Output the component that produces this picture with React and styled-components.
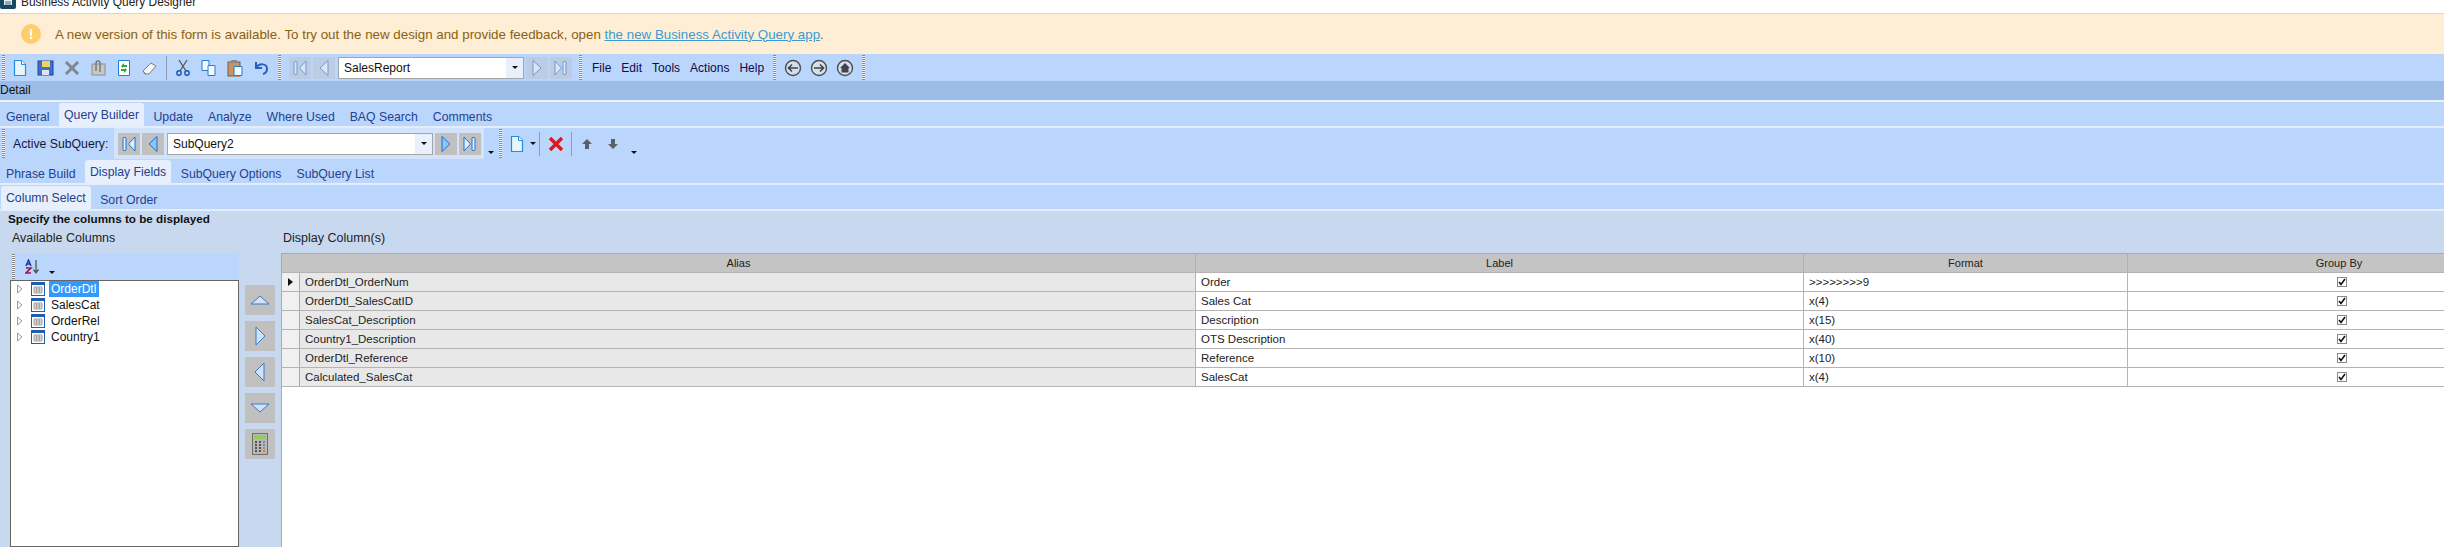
import React from "react";
import styled, { createGlobalStyle } from "styled-components";

const GlobalStyle = createGlobalStyle`
    html, body {
        margin: 0;
        padding: 0;
        background: #fff;
        overflow: hidden;
    }
    body {
        font-family: "Liberation Sans", Arial, sans-serif;
        font-size: 12px;
    }
`;

const Page = styled.div`
    width: 2444px;
    height: 547px;
    overflow: hidden;
    display: flex;
    flex-direction: column;
    color: #111;
`;

const TitleBar = styled.div`
    height: 13px;
    flex: none;
    display: flex;
    align-items: flex-start;
    gap: 5px;
    overflow: hidden;
    font-size: 11.9px;
    line-height: 14px;
    color: #222;
    border-bottom: 1px solid #c6daf4;
`;

const TitleText = styled.span`
    margin-top: -5px;
`;

const Banner = styled.div`
    height: 40px;
    flex: none;
    background: #fdeed5;
    display: flex;
    align-items: center;
    gap: 14px;
    padding-left: 21px;
    font-size: 13.33px;
    color: #8a6114;
`;

const WarnDot = styled.div`
    width: 20px;
    height: 20px;
    border-radius: 50%;
    background: #fdcf6c;
    color: #fff;
    font-weight: bold;
    font-size: 14px;
    display: flex;
    align-items: center;
    justify-content: center;
`;

const BannerLink = styled.a`
    color: #3d9ad1;
    text-decoration: underline;
`;

const ToolStrip = styled.div`
    height: ${(p) => p.$h || 27}px;
    flex: none;
    background: #bad6fd;
    display: flex;
    align-items: center;
`;

const Grip = styled.div`
    width: 3px;
    height: ${(p) => p.$h || 25}px;
    margin: 0 ${(p) => p.$m ?? 4}px 0 ${(p) => p.$l ?? 2}px;
    flex: none;
    background: repeating-linear-gradient(#8a8a8a 0 1px, #eef3fb 1px 2px);
`;

const ToolIcon = styled.svg`
    width: 18px;
    height: 18px;
    flex: none;
    margin-right: ${(p) => p.$gap ?? 8}px;
`;

const Divider = styled.div`
    width: 1px;
    height: 24px;
    flex: none;
    background: #8f9caf;
    margin: 0 ${(p) => p.$r ?? 8}px 0 ${(p) => p.$l ?? 0}px;
`;

const NavButton = styled.div`
    width: 22px;
    height: 22px;
    flex: none;
    background: ${(p) => (p.$on ? "#c0c0c0" : "#bccde3")};
    margin-right: 2px;
    display: flex;
    align-items: center;
    justify-content: center;
`;

const Combo = styled.div`
    width: ${(p) => p.$w}px;
    height: 22px;
    flex: none;
    box-sizing: border-box;
    background: #fff;
    border: 1px solid #a5a5a5;
    display: flex;
    align-items: center;
    justify-content: space-between;
    padding-left: 5px;
    margin: 0 2px 0 1px;
    font-size: 12px;
`;

const ComboArrow = styled.div`
    width: 17px;
    height: 100%;
    background: #e8f0fb;
    display: flex;
    align-items: center;
    justify-content: center;
    &::after {
        content: "";
        border-left: 3px solid transparent;
        border-right: 3px solid transparent;
        border-top: 3px solid #111;
    }
`;

const MenuItems = styled.div`
    display: flex;
    gap: 10px;
    font-size: 12px;
    color: #14084a;
`;

const DetailBar = styled.div`
    height: 19px;
    flex: none;
    background: #9dbde8;
    font-size: 12px;
    line-height: 19px;
    border-bottom: 2px solid #e9f1fc;
`;

const TabRow = styled.div`
    height: 26px;
    flex: none;
    box-sizing: border-box;
    background: #bad6fd;
    display: flex;
    align-items: flex-end;
    border-bottom: 2px solid #e4eefb;
`;

const Tab = styled.div`
    box-sizing: border-box;
    height: ${(p) => (p.$active ? "calc(100% - 1px)" : "auto")};
    margin: ${(p) => (p.$active ? "0 2px" : "0")};
    padding: ${(p) => (p.$active ? "3px 5px 0" : "0 7.5px")};
    font-size: 12.25px;
    line-height: 18px;
    color: #25408f;
    background: ${(p) => (p.$active ? "#e6effb" : "transparent")};
    border-radius: 3px 3px 0 0;
    white-space: nowrap;
    &:first-child {
        padding-left: ${(p) => (p.$active ? 5 : 6)}px;
        margin-left: ${(p) => (p.$active ? 1 : 0)}px;
    }
`;

const SubQueryLabel = styled.div`
    width: 101px;
    flex: none;
    font-size: 12.25px;
    white-space: nowrap;
    color: #14143c;
`;

const NavGroup = styled.div`
    background: #d2e3fb;
    height: 100%;
    padding: 0 1px 0 4px;
    display: flex;
    align-items: center;
    flex: none;
`;

const Caret = styled.div`
    width: 0;
    height: 0;
    flex: none;
    align-self: ${(p) => (p.$mid ? "center" : "flex-end")};
    margin: 0 ${(p) => p.$r ?? 4}px ${(p) => (p.$mid ? 0 : p.$b ?? 5)}px ${(p) => p.$l ?? 4}px;
    border-left: 3px solid transparent;
    border-right: 3px solid transparent;
    border-top: 3px solid #111;
`;

const Panel = styled.div`
    flex: 1;
    min-height: 0;
    background: #c8d9ef;
    display: flex;
    flex-direction: column;
`;

const Hint = styled.div`
    font-weight: bold;
    font-size: 11.7px;
    line-height: 16px;
    padding-left: 8px;
    color: #111;
`;

const Columns = styled.div`
    flex: 1;
    min-height: 0;
    display: flex;
    padding-top: 2px;
`;

const AvailableColumn = styled.div`
    width: 229px;
    margin-left: 10px;
    flex: none;
    display: flex;
    flex-direction: column;
`;

const SectionLabel = styled.div`
    height: 24px;
    line-height: 18px;
    font-size: 12.5px;
    color: #222;
    padding-left: 2px;
`;

const SortBar = styled.div`
    height: 27px;
    flex: none;
    background: #bad6fd;
    display: flex;
    align-items: center;
`;

const Tree = styled.div`
    flex: 1;
    box-sizing: border-box;
    background: #fff;
    border: 1px solid #666;
    padding-left: 6px;
`;

const TreeRow = styled.div`
    height: 16px;
    display: flex;
    align-items: center;
    font-size: 12px;
`;

const Expander = styled.svg`
    width: 6px;
    height: 10px;
    margin-right: 8px;
    flex: none;
`;

const TableGlyph = styled.svg`
    width: 14px;
    height: 14px;
    flex: none;
`;

const TreeLabel = styled.span`
    margin-left: 4px;
    padding: 0 3px 0 2px;
    height: 16px;
    line-height: 16px;
    background: ${(p) => (p.$selected ? "#3399ff" : "transparent")};
    color: ${(p) => (p.$selected ? "#fff" : "#111")};
`;

const MoveButtons = styled.div`
    width: 42px;
    flex: none;
    padding: 56px 6px 0;
    box-sizing: border-box;
    display: flex;
    flex-direction: column;
    gap: 6px;
`;

const MoveButton = styled.div`
    width: 30px;
    height: 30px;
    background: #c0c0c0;
    display: flex;
    align-items: center;
    justify-content: center;
`;

const GridColumn = styled.div`
    flex: 1;
    min-width: 0;
    display: flex;
    flex-direction: column;
`;

const GridWrap = styled.div`
    flex: 1;
    background: #fff;
    border-left: 1px solid #aaa;
    overflow: hidden;
`;

const Row = styled.div`
    display: grid;
    grid-template-columns: 18px 896px 608px 324px 423px;
    width: 2270px;
    height: ${(p) => p.$h || 19}px;
    box-sizing: border-box;
    border-bottom: 1px solid #b4b4b4;
    font-size: 11.5px;
`;

const HeaderCell = styled.div`
    grid-column: ${(p) => p.$span || "auto"};
    background: #c4c4c4;
    border-right: 1px solid #b0b0b0;
    border-top: 1px solid #aaa;
    text-align: center;
    line-height: 18px;
    font-size: 11px;
    color: #222;
`;

const RowHead = styled.div`
    background: #f0f0f0;
    border-right: 1px solid #aaa;
    display: flex;
    align-items: center;
    justify-content: center;
    &::after {
        content: "";
        display: ${(p) => (p.$current ? "block" : "none")};
        border-top: 4px solid transparent;
        border-bottom: 4px solid transparent;
        border-left: 5px solid #111;
    }
`;

const Cell = styled.div`
    background: ${(p) => (p.$ro ? "#e8e8e8" : "#fff")};
    border-right: 1px solid #b4b4b4;
    padding-left: 5px;
    line-height: 18px;
    color: #222;
    display: ${(p) => (p.$center ? "flex" : "block")};
    align-items: center;
    justify-content: ${(p) => (p.$center ? "center" : "flex-start")};
`;

const Checkbox = styled.div`
    width: 10px;
    height: 10px;
    box-sizing: border-box;
    background: #fff;
    border: 1px solid #8a8a8a;
    display: flex;
    align-items: center;
    justify-content: center;
`;

const rows = [
    ["OrderDtl_OrderNum", "Order", ">>>>>>>>9"],
    ["OrderDtl_SalesCatID", "Sales Cat", "x(4)"],
    ["SalesCat_Description", "Description", "x(15)"],
    ["Country1_Description", "OTS Description", "x(40)"],
    ["OrderDtl_Reference", "Reference", "x(10)"],
    ["Calculated_SalesCat", "SalesCat", "x(4)"],
];

const Icon = ({ children, gap }) => (
    <ToolIcon viewBox="0 0 18 18" $gap={gap}>{children}</ToolIcon>
);

const PageIcon = ({ gap }) => (
    <Icon gap={gap}>
        <path d="M3.5 1.5h7l4 4v11h-11z" fill="#e8f4fe" stroke="#1f8fe0" strokeWidth="1.2" />
        <path d="M10.5 1.5v4h4" fill="#fff" stroke="#1f8fe0" />
    </Icon>
);

const Chevron = ({ dir, bar, color = "#6f9ad2", fill = "#d6e6fb" }) => {
    const fwd = dir === "right";
    return (
        <svg width="16" height="18" viewBox="0 0 16 18">
            {fwd ? (
                <path d={bar ? "M2 2l6.500 7-6.500 7z" : "M4 1.500l8 7.500-8 7.500z"} fill={fill} stroke={color} />
            ) : (
                <path d={bar ? "M14 2l-6.500 7 6.500 7z" : "M12 1.500L4 9l8 7.500z"} fill={fill} stroke={color} />
            )}
            {bar && (
                <rect x={fwd ? 10 : 2} y="2.500" width="3" height="13" rx="1" fill={fill} stroke={color} />
            )}
        </svg>
    );
};

const App = () => {
    return (
        <Page>
            <GlobalStyle />
            <TitleBar>
                <svg width="16" height="9" viewBox="0 0 16 9" style={{ flex: "none" }}>
                    <path d="M0 0h16v7q0 2-2 2H2q-2 0-2-2z" fill="#17495e" />
                    <path d="M4 0h8v5H4z" fill="#e8f0f3" />
                    <path d="M5 2h6M5 4h6" stroke="#17495e" strokeWidth="0.8" />
                </svg>
                <TitleText>Business Activity Query Designer</TitleText>
            </TitleBar>

            <Banner>
                <WarnDot>!</WarnDot>
                <span>
                    A new version of this form is available. To try out the new design and provide feedback, open{" "}
                    <BannerLink>the new Business Activity Query app</BannerLink>.
                </span>
            </Banner>

            <ToolStrip>
                <Grip $m={6} />
                <PageIcon />
                <Icon>
                    <rect x="1" y="2" width="15" height="14" fill="#3f6fd0" stroke="#22418f" />
                    <rect x="5" y="2" width="8" height="6" fill="#f6d25a" />
                    <rect x="5" y="11" width="7" height="5" fill="#dfe6f2" />
                </Icon>
                <Icon>
                    <path d="M3 3l12 12M15 3L3 15" stroke="#7f8790" strokeWidth="3" />
                </Icon>
                <Icon>
                    <rect x="3" y="5" width="13" height="11" fill="#c7c7c7" stroke="#8c8c8c" />
                    <path d="M7 12V4a2 2 0 0 1 4 0v9" fill="none" stroke="#777" strokeWidth="1.4" />
                </Icon>
                <Icon>
                    <path d="M3.500 1.500h11v15h-11z" fill="#fff" stroke="#1f7fd0" />
                    <path d="M6 7l3-3v2h3v2H8v1zM12 11l-3 3v-2H6v-2h4V9z" fill="#2aa838" />
                </Icon>
                <Icon gap={7}>
                    <path d="M2 12l8-8 5 3-7 8H4z" fill="#f4f4f4" stroke="#77808a" />
                    <path d="M2 12l3 3" stroke="#77808a" />
                </Icon>
                <Divider $r={7} />
                <Icon>
                    <path d="M5 1l7 11M13 1L6 12" stroke="#555" strokeWidth="1.3" />
                    <circle cx="5" cy="14" r="2.200" fill="none" stroke="#1c56b8" strokeWidth="1.4" />
                    <circle cx="13" cy="14" r="2.200" fill="none" stroke="#1c56b8" strokeWidth="1.4" />
                </Icon>
                <Icon>
                    <path d="M2 1.500h7v10H2z" fill="#f3f9ff" stroke="#1f7fd0" />
                    <path d="M8 6.500h7v10H8z" fill="#f3f9ff" stroke="#1f7fd0" />
                </Icon>
                <Icon>
                    <rect x="2" y="3" width="12" height="14" fill="#c79464" stroke="#7b5a3c" />
                    <rect x="5" y="1" width="6" height="3" fill="#888" />
                    <path d="M8 7.500h8v9H8z" fill="#f3f9ff" stroke="#1f7fd0" />
                </Icon>
                <Icon gap={8}>
                    <path d="M4 3v6h6M4 9c3-5 11-5 11 1 0 2-1 4-4 5" fill="none" stroke="#2a5fc0" strokeWidth="2" />
                </Icon>
                <Grip $l={0} $m={8} />
                <NavButton><Chevron dir="left" bar /></NavButton>
                <NavButton><Chevron dir="left" /></NavButton>
                <Combo $w={186}>
                    SalesReport
                    <ComboArrow />
                </Combo>
                <NavButton><Chevron dir="right" /></NavButton>
                <NavButton><Chevron dir="right" bar /></NavButton>
                <Grip $l={5} $m={10} />
                <MenuItems>
                    <span>File</span>
                    <span>Edit</span>
                    <span>Tools</span>
                    <span>Actions</span>
                    <span>Help</span>
                </MenuItems>
                <Grip $l={9} $m={8} />
                <Icon gap={8}>
                    <circle cx="9" cy="9" r="7.500" fill="#d7dfeb" stroke="#4a4f57" strokeWidth="1.4" />
                    <path d="M14 9H5M8 5.500L4.500 9 8 12.500" fill="none" stroke="#3f444c" strokeWidth="1.6" />
                </Icon>
                <Icon gap={8}>
                    <circle cx="9" cy="9" r="7.500" fill="#d7dfeb" stroke="#4a4f57" strokeWidth="1.4" />
                    <path d="M4 9h9M10 5.500L13.500 9 10 12.500" fill="none" stroke="#3f444c" strokeWidth="1.6" />
                </Icon>
                <Icon gap={8}>
                    <circle cx="9" cy="9" r="7.500" fill="#d7dfeb" stroke="#4a4f57" strokeWidth="1.4" />
                    <path d="M9 4l5 5h-1.500v4.500h-7V9H4z" fill="#3f444c" />
                </Icon>
                <Grip $l={0} $m={0} />
            </ToolStrip>

            <DetailBar>Detail</DetailBar>

            <TabRow>
                <Tab>General</Tab>
                <Tab $active>Query Builder</Tab>
                <Tab>Update</Tab>
                <Tab>Analyze</Tab>
                <Tab>Where Used</Tab>
                <Tab>BAQ Search</Tab>
                <Tab>Comments</Tab>
            </TabRow>

            <ToolStrip $h={31}>
                <Grip $h={29} $m={8} />
                <SubQueryLabel>Active SubQuery:</SubQueryLabel>
                <NavGroup>
                    <NavButton $on><Chevron dir="left" bar color="#1e6fd0" fill="#e2f0ff" /></NavButton>
                    <NavButton $on><Chevron dir="left" color="#1e6fd0" fill="#8fc4f8" /></NavButton>
                    <Combo $w={266}>
                        SubQuery2
                        <ComboArrow />
                    </Combo>
                    <NavButton $on><Chevron dir="right" color="#1e6fd0" fill="#8fc4f8" /></NavButton>
                    <NavButton $on><Chevron dir="right" bar color="#1e6fd0" fill="#e2f0ff" /></NavButton>
                </NavGroup>
                <Caret $r={5} />
                <Grip $h={29} $l={0} $m={6} />
                <PageIcon gap={4} />
                <Caret $mid $l={0} $r={3} />
                <Divider $r={7} />
                <Icon gap={6}>
                    <path d="M3 3l12 12M15 3L3 15" stroke="#e01818" strokeWidth="3.4" />
                </Icon>
                <Divider $r={6} />
                <Icon gap={8}>
                    <path d="M9 4l5 5h-3v5H7V9H4z" fill="#5c6066" />
                </Icon>
                <Icon gap={9}>
                    <path d="M9 14L4 9h3V4h4v5h3z" fill="#5c6066" />
                </Icon>
                <Caret $l={0} />
            </ToolStrip>

            <TabRow>
                <Tab>Phrase Build</Tab>
                <Tab $active>Display Fields</Tab>
                <Tab>SubQuery Options</Tab>
                <Tab>SubQuery List</Tab>
            </TabRow>

            <TabRow>
                <Tab $active>Column Select</Tab>
                <Tab>Sort Order</Tab>
            </TabRow>

            <Panel>
                <Hint>Specify the columns to be displayed</Hint>
                <Columns>
                    <AvailableColumn>
                        <SectionLabel>Available Columns</SectionLabel>
                        <SortBar>
                            <Grip $l={2} $m={10} />
                            <svg width="16" height="16" viewBox="0 0 16 16">
                                <path d="M11 1v12M8.500 10.500L11 14l2.500-3.500" fill="none" stroke="#555" strokeWidth="1.3" />
                                <path d="M1 7l2.500-6L6 7M2 5h3" fill="none" stroke="#2230a8" strokeWidth="1.4" />
                                <path d="M1 9h5L1 14h5" fill="none" stroke="#a01650" strokeWidth="1.6" />
                            </svg>
                            <Caret $l={8} $b={6} />
                        </SortBar>
                        <Tree>
                            {["OrderDtl", "SalesCat", "OrderRel", "Country1"].map((name, i) => (
                                <TreeRow key={name}>
                                    <Expander viewBox="0 0 6 10">
                                        <path d="M0.500 1l4.500 4-4.500 4z" fill="#fff" stroke="#8f9aa6" />
                                    </Expander>
                                    <TableGlyph viewBox="0 0 14 14">
                                        <rect x="0.500" y="0.500" width="13" height="13" fill="#fff" stroke="#1c5fb0" />
                                        <rect x="1" y="1" width="12" height="2" fill="#1c5fb0" />
                                        <path d="M3 5h8v6H3zM3 7h8M3 9h8M5.700 5v6M8.300 5v6" fill="none" stroke="#8a8a8a" strokeWidth="0.8" />
                                    </TableGlyph>
                                    <TreeLabel $selected={i === 0}>{name}</TreeLabel>
                                </TreeRow>
                            ))}
                        </Tree>
                    </AvailableColumn>

                    <MoveButtons>
                        <MoveButton>
                            <svg width="20" height="12" viewBox="0 0 20 12">
                                <path d="M1 10L10 2l9 8z" fill="#cfe2fb" stroke="#3f78c0" />
                            </svg>
                        </MoveButton>
                        <MoveButton>
                            <svg width="12" height="20" viewBox="0 0 12 20">
                                <path d="M2 1l9 9-9 9z" fill="#cfe2fb" stroke="#3f78c0" />
                            </svg>
                        </MoveButton>
                        <MoveButton>
                            <svg width="12" height="20" viewBox="0 0 12 20">
                                <path d="M10 1L1 10l9 9z" fill="#cfe2fb" stroke="#3f78c0" />
                            </svg>
                        </MoveButton>
                        <MoveButton>
                            <svg width="20" height="12" viewBox="0 0 20 12">
                                <path d="M1 2l9 8 9-8z" fill="#cfe2fb" stroke="#3f78c0" />
                            </svg>
                        </MoveButton>
                        <MoveButton>
                            <svg width="16" height="22" viewBox="0 0 16 22">
                                <rect x="0.500" y="0.500" width="15" height="21" fill="#b8b8b8" stroke="#6f6f6f" />
                                <rect x="2" y="2" width="12" height="4" fill="#8fcf5a" />
                                <path d="M3 9h2M7 9h2M3 12h2M7 12h2M3 15h2M7 15h2M3 18h2M7 18h2" stroke="#333" strokeWidth="1.4" />
                                <path d="M11 9h2M11 12h2" stroke="#5a7fc0" strokeWidth="1.4" />
                                <path d="M11 15h2M11 18h2" stroke="#c8703a" strokeWidth="1.4" />
                            </svg>
                        </MoveButton>
                    </MoveButtons>

                    <GridColumn>
                        <SectionLabel>Display Column(s)</SectionLabel>
                        <GridWrap>
                            <Row $h={20}>
                                <HeaderCell $span="span 2">Alias</HeaderCell>
                                <HeaderCell>Label</HeaderCell>
                                <HeaderCell>Format</HeaderCell>
                                <HeaderCell>Group By</HeaderCell>
                            </Row>
                            {rows.map(([alias, label, format], i) => (
                                <Row key={alias}>
                                    <RowHead $current={i === 0} />
                                    <Cell $ro>{alias}</Cell>
                                    <Cell>{label}</Cell>
                                    <Cell>{format}</Cell>
                                    <Cell $center>
                                        <Checkbox>
                                            <svg width="8" height="8" viewBox="0 0 8 8">
                                                <path d="M1 4l2 2.500L7 1" fill="none" stroke="#111" strokeWidth="1.6" />
                                            </svg>
                                        </Checkbox>
                                    </Cell>
                                </Row>
                            ))}
                        </GridWrap>
                    </GridColumn>
                </Columns>
            </Panel>
        </Page>
    );
};

export default App;
